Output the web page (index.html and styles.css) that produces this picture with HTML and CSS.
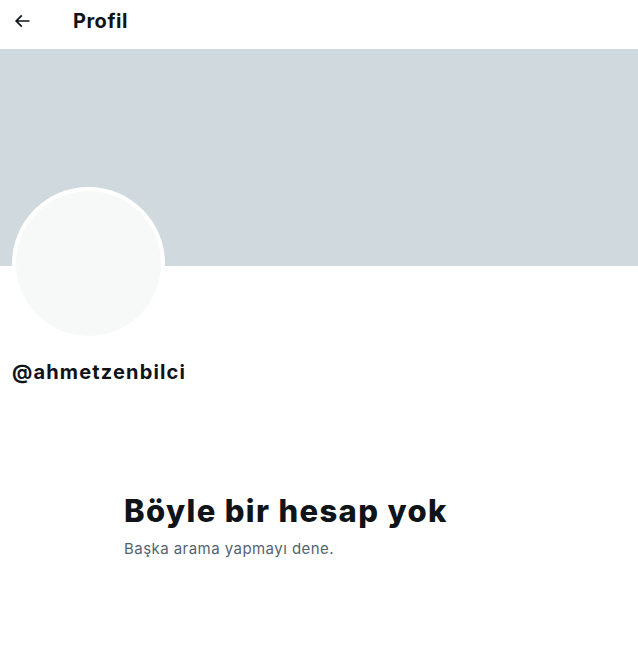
FILE: index.html
```html
<!DOCTYPE html>
<html lang="tr">
<head>
<meta charset="utf-8">
<link rel="stylesheet" href="styles.css">
</head>
<body>
<header class="topbar">
  <button class="back" aria-label="Geri">
    <svg viewBox="0 0 24 24" width="20" height="20"><path d="M7.414 13l5.043 5.04-1.414 1.42L3.586 12l7.457-7.46 1.414 1.42L7.414 11H21v2H7.414z"/></svg>
  </button>
  <h2 class="title">Profil</h2>
</header>
<div class="banner"></div>
<div class="profile">
  <div class="avatar"><div class="avatar-inner"></div></div>
  <div class="handle">@ahmetzenbilci</div>
</div>
<section class="empty">
  <h1 class="empty-title">Böyle bir hesap yok</h1>
  <p class="empty-text">Başka arama yapmayı dene.</p>
</section>
</body>
</html>
```
FILE: styles.css
```css
* { box-sizing: border-box; }
html, body { margin: 0; padding: 0; background: #fff; }
body {
  font-family: "Inter", "Liberation Sans", sans-serif;
  color: #0f1419;
  width: 638px;
}
.topbar {
  height: 49px;
  display: flex;
  align-items: center;
  padding: 0 0 8px 12px;
}
.back {
  width: 20px; height: 20px;
  padding: 0; margin: 0;
  border: 0; background: none;
  display: flex; align-items: center; justify-content: center;
}
.back svg { fill: #0f1419; }
.title {
  margin: 0 0 0 41px;
  font-size: 20px;
  font-weight: 700;
  line-height: 24px;
  letter-spacing: 0.5px;
}
.banner {
  height: 217px;
  background: #cfd9de;
}
.profile {
  padding: 0 12px;
}
.avatar {
  width: 153px;
  height: 153px;
  margin-top: -79px;
  border-radius: 50%;
  background: #fff;
  padding: 4px;
}
.avatar-inner {
  width: 100%; height: 100%;
  border-radius: 50%;
  background: #f7f9f9;
}
.handle {
  margin-top: 20px;
  font-size: 20px;
  font-weight: 700;
  line-height: 24px;
  letter-spacing: 1.15px;
}
.empty {
  padding: 0 0 0 124px;
  margin-top: 109px;
}
.empty-title {
  margin: 0;
  font-size: 31px;
  font-weight: 800;
  line-height: 36px;
  letter-spacing: 1.35px;
}
.empty-text {
  margin: 10px 0 0;
  font-size: 15px;
  line-height: 20px;
  color: #536471;
  letter-spacing: 0.45px;
}
```
